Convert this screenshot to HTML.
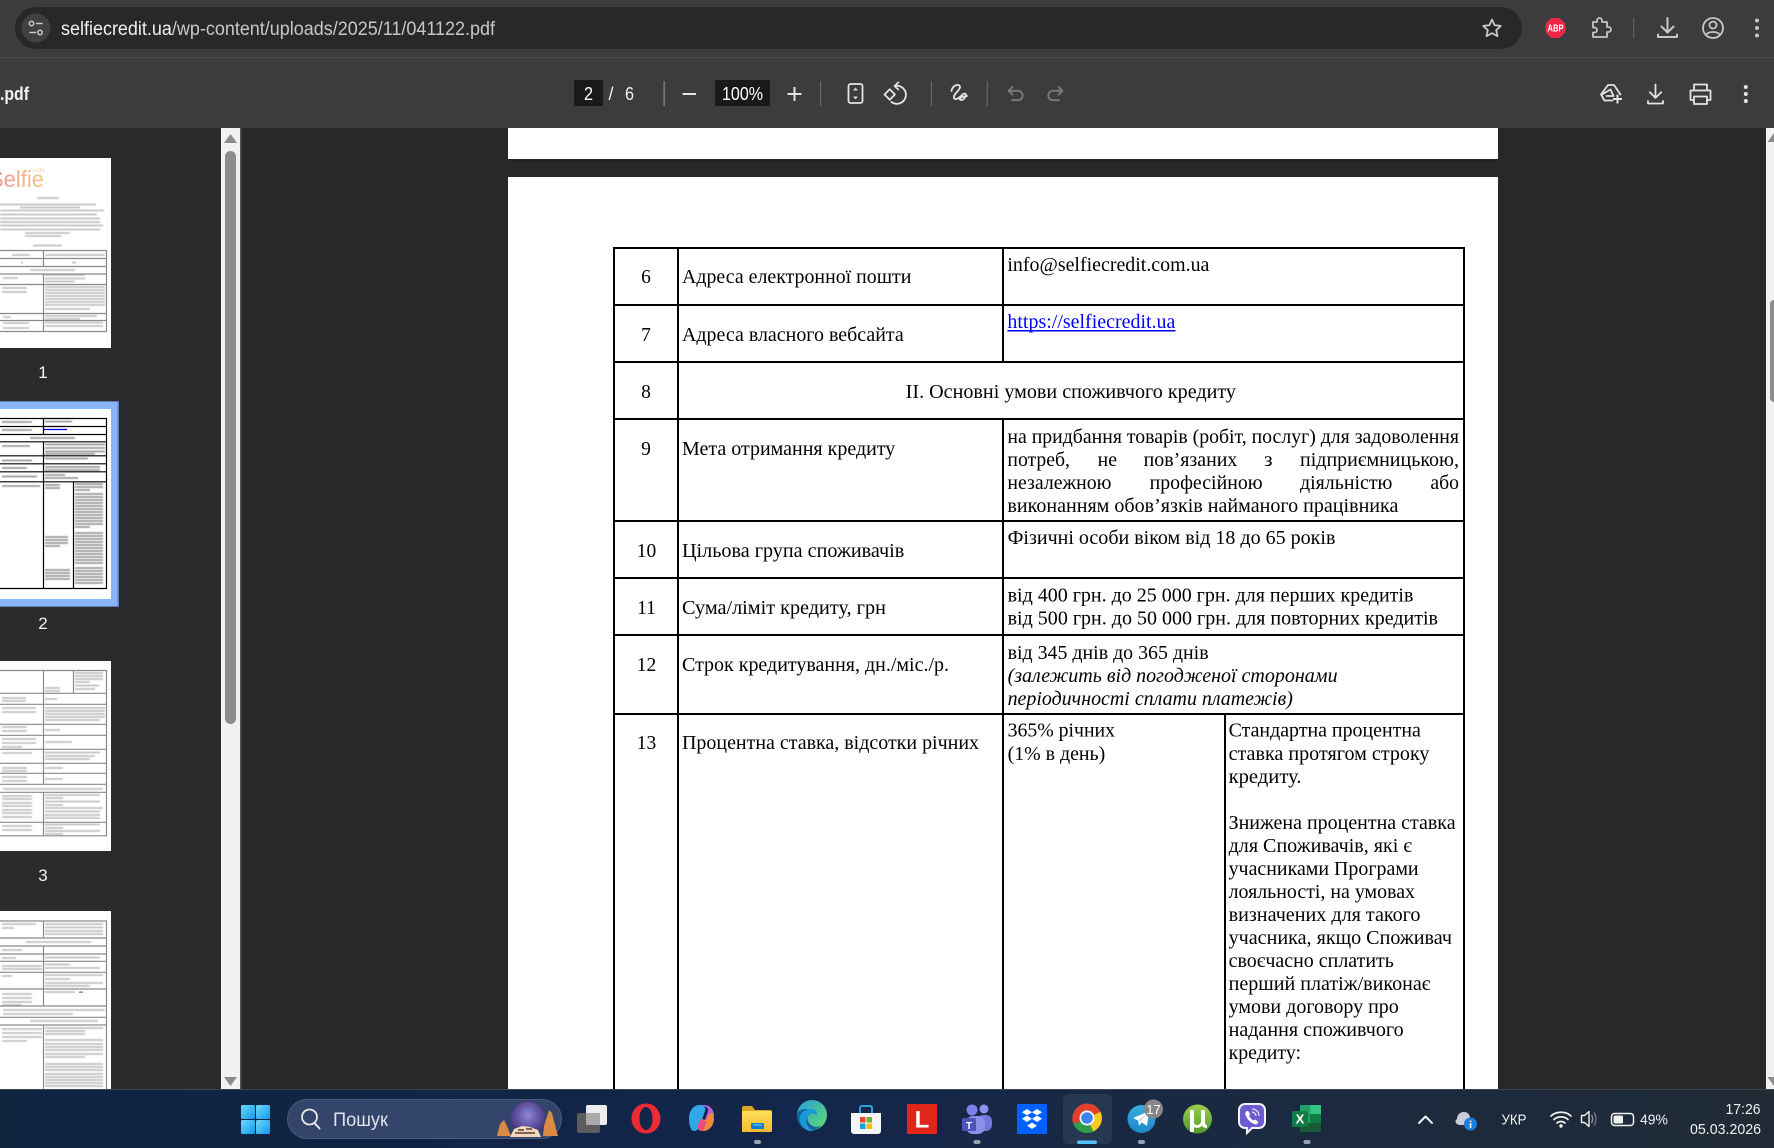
<!DOCTYPE html>
<html lang="uk"><head><meta charset="utf-8"><title>041122.pdf</title>
<style>
html,body{margin:0;padding:0;background:#282828;overflow:hidden}
svg{display:block}
.t{font:19.5px "Liberation Serif","DejaVu Serif",serif;fill:#000}
.i{font:italic 19.5px "Liberation Serif","DejaVu Serif",serif;fill:#000}
.u{font-family:"Liberation Sans","DejaVu Sans",sans-serif;fill:#e3e3e3}
.ic{fill:none;stroke:#e3e3e3;stroke-width:1.8;stroke-linecap:round;stroke-linejoin:round}
.ig{fill:none;stroke:#c7c7c7;stroke-width:1.8;stroke-linecap:round;stroke-linejoin:round}
.bar{fill:none;stroke-width:1.6}
</style></head><body>
<svg width="1774" height="1148" viewBox="0 0 1774 1148" xmlns="http://www.w3.org/2000/svg">
<defs>
<linearGradient id="tb" x1="0" x2="1" y1="0" y2="0"><stop offset="0" stop-color="#10233f"/><stop offset=".45" stop-color="#13264b"/><stop offset=".75" stop-color="#1b2a3f"/><stop offset="1" stop-color="#202b36"/></linearGradient>
<linearGradient id="win" x1="0" x2="1" y1="0" y2="1"><stop offset="0" stop-color="#6fd6f8"/><stop offset="1" stop-color="#0d9df0"/></linearGradient>
<linearGradient id="logo" x1="0" x2="1" y1="0" y2="0"><stop offset="0" stop-color="#ef8f96"/><stop offset="1" stop-color="#f5c985"/></linearGradient>
<linearGradient id="edge" x1="0" x2="1" y1="0" y2="1"><stop offset="0" stop-color="#2a9fd8"/><stop offset="1" stop-color="#5fdc6e"/></linearGradient>
<linearGradient id="tg" x1="0" x2="0" y1="0" y2="1"><stop offset="0" stop-color="#37aee2"/><stop offset="1" stop-color="#1e88c8"/></linearGradient>
<linearGradient id="ut" x1="0" x2="0" y1="0" y2="1"><stop offset="0" stop-color="#9bd04a"/><stop offset="1" stop-color="#4f9a2a"/></linearGradient>
<radialGradient id="sky" cx=".5" cy=".4" r=".6"><stop offset="0" stop-color="#8d86d6"/><stop offset="1" stop-color="#3b2a72"/></radialGradient>
<linearGradient id="fold" x1="0" x2="0" y1="0" y2="1"><stop offset="0" stop-color="#ffe05a"/><stop offset="1" stop-color="#f7b92b"/></linearGradient>
<filter id="soft" x="-5%" y="-5%" width="110%" height="110%"><feGaussianBlur stdDeviation=".45"/></filter>
</defs>

<!-- window chrome -->
<rect width="1774" height="1148" fill="#282828"/>
<rect width="1774" height="128" fill="#3c3c3c"/>
<rect y="57" width="1774" height="1" fill="#4a4a4a"/>
<rect x="15" y="7" width="1507" height="42" rx="21" fill="#282828"/>
<circle cx="36" cy="28" r="14.5" fill="#414141"/>
<g class="ig" style="stroke-width:1.5"><circle cx="31.5" cy="23.5" r="2.2"/><path d="M36.5 23.5h5.5M30 32.5h5.5"/><circle cx="40" cy="32.5" r="2.2"/></g>
<text x="61" y="35" class="u" font-size="19" textLength="434" lengthAdjust="spacingAndGlyphs"><tspan fill="#f0f0f0">selfiecredit.ua</tspan><tspan fill="#c7c7c7">/wp-content/uploads/2025/11/041122.pdf</tspan></text>
<path class="ig" d="M1492 19.5l2.6 5.7 6.2.7-4.6 4.2 1.3 6.1-5.5-3.1-5.5 3.1 1.3-6.1-4.6-4.2 6.2-.7z"/>
<path d="M1551.3 18h8.4l5.8 5.8v8.4l-5.8 5.8h-8.4l-5.8-5.8v-8.4z" fill="#ee2748"/>
<text x="1555.5" y="31.5" class="u" font-size="10" font-weight="700" text-anchor="middle" style="fill:#fff" textLength="16" lengthAdjust="spacingAndGlyphs">ABP</text>
<path class="ig" d="M1593 22h4v-1.5a2.5 2.5 0 0 1 5 0V22h5v5h1.5a2.5 2.5 0 0 1 0 5H1607v5h-14v-4.5h1.5a2.5 2.5 0 0 0 0-5H1593z"/>
<rect x="1633" y="18" width="1.3" height="20" fill="#5f5f5f"/>
<path class="ig" style="stroke-width:2" d="M1667.5 18v14M1661.5 26.500l6 6 6-6M1658 34.500v2.500h19v-2.500"/>
<circle class="ig" cx="1713" cy="28" r="10"/><circle class="ig" cx="1713" cy="25" r="3.5"/><path class="ig" d="M1706 35c2-4 12-4 14 0"/>
<g fill="#c7c7c7"><circle cx="1757" cy="20.500" r="2"/><circle cx="1757" cy="28" r="2"/><circle cx="1757" cy="35.500" r="2"/></g>

<!-- pdf toolbar -->
<text x="0" y="100" class="u" font-size="18" font-weight="700" style="fill:#f1f1f1" textLength="29" lengthAdjust="spacingAndGlyphs">.pdf</text>
<rect x="574" y="80" width="29" height="26" fill="#191919"/>
<text x="588.500" y="100" class="u" font-size="18" text-anchor="middle" style="fill:#fff" textLength="9" lengthAdjust="spacingAndGlyphs">2</text>
<text x="611" y="100" class="u" font-size="18" text-anchor="middle" style="fill:#f1f1f1">/</text>
<text x="629.500" y="100" class="u" font-size="18" text-anchor="middle" style="fill:#f1f1f1" textLength="9" lengthAdjust="spacingAndGlyphs">6</text>
<rect x="663.300" y="81" width="1.800" height="25" fill="#757575"/>
<path class="ic" style="stroke-width:2;stroke-linecap:butt" d="M682.500 94h13.500"/>
<rect x="715" y="80" width="55" height="26" fill="#191919"/>
<text x="742.500" y="100" class="u" font-size="18" text-anchor="middle" style="fill:#fff" textLength="41" lengthAdjust="spacingAndGlyphs">100%</text>
<path class="ic" style="stroke-width:2;stroke-linecap:butt" d="M787.500 94h14M794.500 87v14"/>
<rect x="820" y="81" width="1.200" height="25" fill="#6a6a6a"/>
<rect class="ic" x="848.500" y="84" width="14" height="19" rx="2"/>
<path d="M855.500 87.500l2.500 3h-5zM855.500 99.500l2.500-3h-5z" fill="#d8d8d8"/>
<path class="ic" d="M884.500 94.500l5.200-5.200 5.200 5.200-5.200 5.200z"/>
<path class="ic" d="M895 86a9 9 0 1 1-3.500 16M898.300 82.500l-3.800 3.500 3.800 3.500"/>
<rect x="930.800" y="81" width="1.200" height="25" fill="#6a6a6a"/>
<path class="ic" d="M951.500 91c1-6 8-8 8.500-4 .4 3-7 7-6 11 .8 2.500 5 .5 8-3 2.500-2.500 5-1.500 3.500 1.500-1.500 3-4 4.500-5.500 3-1-1 1-3 7-3.500"/>
<rect x="986.600" y="81" width="1.200" height="25" fill="#6a6a6a"/>
<path fill="none" stroke="#7b7b7b" stroke-width="1.800" stroke-linecap="round" stroke-linejoin="round" d="M1012.500 87l-4 3.800 4 3.800M1008.700 90.800h9.300a4.700 4.700 0 0 1 0 9.400h-6"/>
<path fill="none" stroke="#7b7b7b" stroke-width="1.800" stroke-linecap="round" stroke-linejoin="round" d="M1058.500 87l4 3.800-4 3.800M1062.300 90.800h-9.300a4.700 4.700 0 0 0 0 9.400h6"/>
<path class="ic" d="M1612.500 100.500h-8l-3.500-6 7-9.500h6l6.500 9.500M1602 94.500l8.500-5 3 6.500h-7"/>
<path class="ic" style="stroke-width:2;stroke-linecap:butt" d="M1613 99h9M1617.500 94.500v9"/>
<path class="ic" d="M1655.500 84.500v13M1649.800 92.200l5.700 5.700 5.700-5.700M1648 101v2.500h15v-2.500"/>
<path class="ic" d="M1694 90v-5.500h13V90M1694 100h-3.500v-9.500h20V100H1707M1694 96.500h13v7.500h-13z"/>
<g fill="#e3e3e3"><circle cx="1745.800" cy="87" r="2"/><circle cx="1745.800" cy="94" r="2"/><circle cx="1745.800" cy="101" r="2"/></g>

<!-- sidebar -->
<rect y="128" width="221" height="961" fill="#2a2b2d"/>
<rect x="221" y="128" width="19" height="961" fill="#f1f1f1"/>
<rect x="240" y="128" width="1.500" height="961" fill="#505050"/>
<path d="M230.500 134l6.500 9h-13z M230.500 1086l6.500-9h-13z" fill="#8c8c8c"/>
<rect x="225" y="151" width="11" height="573" rx="5.500" fill="#8c8c8c"/>

<!-- thumb 1 -->
<rect x="0" y="158" width="111" height="190" fill="#fff"/>
<text x="-11" y="187" font-family="Liberation Sans,sans-serif" font-size="23" fill="url(#logo)" textLength="55" lengthAdjust="spacingAndGlyphs">Selfie</text>
<text x="29.500" y="172" font-family="Liberation Sans,sans-serif" font-size="6" fill="#f5d5a5" textLength="15">credit</text>
<path class="bar" filter="url(#soft)" stroke="#b8b8b8" d="M37 198h22M0 204.500h96M20 207.500h60M0 210.500h104M0 214.500h97M0 218.500h100M0 222h100M0 225.500h103M0 229.500h100M25 233h45M25 236h36M33 245.500h29
M12 255h18M45 255h60M21 262.500h2M72 262.500h4M30 270h45M45 275h40M45 278.500h40M45 281.500h30M3 278h15M2 288h25M2 292h25M45 287h60M45 290h60M45 293h60M45 296h60M45 299h60M45 302h60M45 305h60M45 309h45M3 317h8M45 316h52M45 319h35M3 323h26M3 328h26M45 322.500h58M45 326h58"/>
<path fill="none" stroke="#8a8a8a" stroke-width="1.200" d="M0 250.500h106.500V331.500H0M0 258.500h106.500M0 266.500h106.500M0 274h106.500M0 284.500h106.500M0 313.500h106.500M0 320.500h106.500M43.500 250.500v16M43.500 274v57.500"/>
<text x="43" y="378" class="u" font-size="17" text-anchor="middle" style="fill:#f5f5f5">1</text>

<!-- thumb 2 -->
<rect x="0" y="401" width="119" height="206" fill="#5d7fb8"/>
<rect x="0" y="402" width="117.500" height="204" fill="#8ab4f8"/>
<rect x="0" y="409" width="111" height="190" fill="#fff"/>
<path class="bar" filter="url(#soft)" stroke="#8a8a8a" d="M2 422h30M45 421.500h27M2 430h30M30 438h45M45 444.500h60M45 448h60M45 451.500h60M2 446h28M45 454h50M2 460.500h30M45 458.500h43M2 468h25M45 467h55M45 470h55M2 476.500h35M45 475h20M45 478h33M2 486h38M45 485h15M45 488h15
M75 484h28M75 487h28M75 490h15M75 494h28M75 497h28M75 500h28M75 503h28M75 506h28M75 509h28M75 512h28M75 515h28M75 518h28M75 521h28M75 524h28M75 527h15M75 533h28M75 536h28M75 539h28M75 542h28M75 545h28M75 548h28M75 551h28M75 554h28M75 557h28M75 560h28M75 563h28M75 568h28M75 571h28M75 574h28M75 577h28M75 580h28M75 583h28M45 537h23M45 540h23M45 543h23M45 546h15M45 570h25M45 573h25M45 576h25M45 579h25"/>
<path d="M44 429.500h23" stroke="#0000e6" stroke-width="1.200"/>
<path fill="none" stroke="#000" stroke-width="1.200" d="M0 418.500h106.500V588.500H0M0 426.500h106.500M0 434.500h106.500M0 441.800h106.500M0 455.800h106.500M0 463.800h106.500M0 471.800h106.500M0 481.800h106.500M43.500 418.500v16M43.500 441.800v146.700M73.500 481.800v106.700"/>
<text x="43" y="629" class="u" font-size="17" text-anchor="middle" style="fill:#f5f5f5">2</text>

<!-- thumb 3 -->
<rect x="0" y="661" width="111" height="190" fill="#fff"/>
<path class="bar" filter="url(#soft)" stroke="#b8b8b8" d="M75 673h28M75 676h28M75 679h28M75 682h15M75 685.500h24M75 689h20M45 688h15M45 691h15M2 698h24M2 701h24M45 699h12M45 708h60M45 711h60M45 714h60M45 717h60M45 720h55M2 708h34M2 712h34M2 727h25M2 731h25M45 730h15M2 739h34M2 743h34M2 747h20M45 742h27M2 753h30M45 752.500h55M45 756h50M45 759h45M2 768h25M2 771h25M45 768h18M2 777h25M2 781h25M45 779h18M3 789h100M2 796h30M2 799h30M2 803h30M2 806h30M2 810h30M2 813h30M2 817h30M45 795h55M45 798h18M45 801.500h55M45 805h18M45 808h58M45 811.500h55M45 815h55M45 818h55M2 826h30M2 830h30M45 824.500h55M45 828h18M45 831h55M45 834h18"/>
<path fill="none" stroke="#8a8a8a" stroke-width="1.200" d="M0 670.500h106.500V835.800H0M0 693.300h106.500M0 704.300h106.500M0 724.300h106.500M0 735.300h106.500M0 749.300h106.500M0 763.300h106.500M0 773.300h106.500M0 784.300h106.500M0 792.300h106.500M0 822.300h106.500M43.500 670.500v113.800M43.500 792.300v43.500M73.500 670.500v22.800"/>
<text x="43" y="881" class="u" font-size="17" text-anchor="middle" style="fill:#f5f5f5">3</text>

<!-- thumb 4 -->
<rect x="0" y="911" width="111" height="178" fill="#fff"/>
<path class="bar" filter="url(#soft)" stroke="#b8b8b8" d="M2 924h34M2 928h12M45 924h58M45 927.500h58M45 931h58M45 934h58M26 942h65M2 950h20M2 958h14M45 957.500h55M2 966h40M2 969h40M45 964.500h25M45 968h55M2 976h10M45 975h58M45 979h25M45 983h58M45 986h45M2 994h30M2 998h30M2 1002h30M2 1005h20M45 992h30M3 1010h102M3 1014h70M30 1021h68M2 1029h40M2 1033h40M2 1037h40M2 1041h25M45 1028h58M45 1031h40M45 1034h40M45 1040h58M45 1044h58M45 1047h58M45 1050h58M45 1054h58M45 1057h40M45 1064h58M45 1067h58M45 1070h58M45 1074h58M45 1077h58M45 1080h58M45 1083h58M45 1086h58"/>
<rect x="79" y="991.500" width="4" height="1.300" fill="#777"/>
<path fill="none" stroke="#8a8a8a" stroke-width="1.200" d="M0 921h106.500V1089M0 938h106.500M0 946h106.500M0 954h106.500M0 961.300h106.500M0 972.300h106.500M0 989h106.500M0 1006h106.500M0 1017.300h106.500M0 1025h106.500M43.500 921v17M43.500 946v60M43.500 1025v64"/>

<!-- right scrollbar -->
<rect x="1766" y="128" width="8" height="961" fill="#f1f1f1"/>
<path d="M1774 133v9h-6.500z M1774 1086v-9h-6.500z" fill="#8c8c8c"/>
<rect x="1770" y="300" width="8" height="102" rx="4" fill="#8c8c8c"/>

<!-- pdf pages -->
<rect x="508" y="128" width="990" height="31" fill="#fff"/>
<rect x="508" y="159" width="990" height="3" fill="#1f1f1f" opacity=".6"/>
<rect x="508" y="177" width="990" height="912" fill="#fff"/>

<path fill="none" stroke="#000" stroke-width="2" d="M614 1089V248H1464V1089M614 305h850M614 362h850M614 419h850M614 521h850M614 578h850M614 635h850M614 714h850M678 248V1089M1003 248V362M1003 419V1089M1225 714V1089"/>

<g class="t">
<text x="646" y="283" text-anchor="middle">6</text>
<text x="646" y="341" text-anchor="middle">7</text>
<text x="646" y="398" text-anchor="middle">8</text>
<text x="646" y="455" text-anchor="middle">9</text>
<text x="646.500" y="557" text-anchor="middle">10</text>
<text x="646.500" y="614" text-anchor="middle">11</text>
<text x="646.500" y="671" text-anchor="middle">12</text>
<text x="646.500" y="749" text-anchor="middle">13</text>
<text x="682" y="283" textLength="229.400" lengthAdjust="spacingAndGlyphs">Адреса електронної пошти</text>
<text x="682" y="341" textLength="221.700" lengthAdjust="spacingAndGlyphs">Адреса власного вебсайта</text>
<text x="682" y="455" textLength="213.300" lengthAdjust="spacingAndGlyphs">Мета отримання кредиту</text>
<text x="682" y="557" textLength="222.300" lengthAdjust="spacingAndGlyphs">Цільова група споживачів</text>
<text x="682" y="614" textLength="203.900" lengthAdjust="spacingAndGlyphs">Сума/ліміт кредиту, грн</text>
<text x="682" y="671" textLength="267" lengthAdjust="spacingAndGlyphs">Строк кредитування, дн./міс./р.</text>
<text x="682" y="749" textLength="297" lengthAdjust="spacingAndGlyphs">Процентна ставка, відсотки річних</text>
<text x="905.700" y="398" textLength="330.300" lengthAdjust="spacingAndGlyphs">ІІ. Основні умови споживчого кредиту</text>
<text x="1007.400" y="271" textLength="202" lengthAdjust="spacingAndGlyphs">info@selfiecredit.com.ua</text>
<text x="1007.400" y="328" textLength="168" lengthAdjust="spacingAndGlyphs" style="fill:#0000ff">https://selfiecredit.ua</text>
<text x="1007.400" y="443" textLength="451.600" lengthAdjust="spacingAndGlyphs">на придбання товарів (робіт, послуг) для задоволення</text>
<text x="1007.400" y="466" textLength="62.600" lengthAdjust="spacingAndGlyphs">потреб,</text>
<text x="1097.700" y="466" textLength="19.300" lengthAdjust="spacingAndGlyphs">не</text>
<text x="1143.600" y="466" textLength="93.800" lengthAdjust="spacingAndGlyphs">пов’язаних</text>
<text x="1264" y="466" textLength="8.500" lengthAdjust="spacingAndGlyphs">з</text>
<text x="1300" y="466" textLength="159" lengthAdjust="spacingAndGlyphs">підприємницькою,</text>
<text x="1007.400" y="489" textLength="104.100" lengthAdjust="spacingAndGlyphs">незалежною</text>
<text x="1149.600" y="489" textLength="113" lengthAdjust="spacingAndGlyphs">професійною</text>
<text x="1300" y="489" textLength="92.400" lengthAdjust="spacingAndGlyphs">діяльністю</text>
<text x="1430.400" y="489" textLength="28.600" lengthAdjust="spacingAndGlyphs">або</text>
<text x="1007.400" y="512" textLength="391" lengthAdjust="spacingAndGlyphs">виконанням обов’язків найманого працівника</text>
<text x="1007.600" y="544" textLength="327.800" lengthAdjust="spacingAndGlyphs">Фізичні особи віком від 18 до 65 років</text>
<text x="1007.600" y="601.500" textLength="405.800" lengthAdjust="spacingAndGlyphs">від 400 грн. до 25 000 грн. для перших кредитів</text>
<text x="1007.600" y="624.500" textLength="430.400" lengthAdjust="spacingAndGlyphs">від 500 грн. до 50 000 грн. для повторних кредитів</text>
<text x="1007.600" y="659" textLength="201" lengthAdjust="spacingAndGlyphs">від 345 днів до 365 днів</text>
<text x="1007.600" y="736.500" textLength="107.400" lengthAdjust="spacingAndGlyphs">365% річних</text>
<text x="1007.600" y="760" textLength="97.600" lengthAdjust="spacingAndGlyphs">(1% в день)</text>
<text x="1228.600" y="736.500" textLength="192.300" lengthAdjust="spacingAndGlyphs">Стандартна процентна</text>
<text x="1228.600" y="760" textLength="200.900" lengthAdjust="spacingAndGlyphs">ставка протягом строку</text>
<text x="1228.600" y="783" textLength="72.900" lengthAdjust="spacingAndGlyphs">кредиту.</text>
<text x="1228.600" y="829" textLength="227" lengthAdjust="spacingAndGlyphs">Знижена процентна ставка</text>
<text x="1228.600" y="852" textLength="183.400" lengthAdjust="spacingAndGlyphs">для Споживачів, які є</text>
<text x="1228.600" y="875" textLength="190" lengthAdjust="spacingAndGlyphs">учасниками Програми</text>
<text x="1228.600" y="898" textLength="186.400" lengthAdjust="spacingAndGlyphs">лояльності, на умовах</text>
<text x="1228.600" y="921" textLength="191.900" lengthAdjust="spacingAndGlyphs">визначених для такого</text>
<text x="1228.600" y="944" textLength="223.400" lengthAdjust="spacingAndGlyphs">учасника, якщо Споживач</text>
<text x="1228.600" y="967" textLength="165.300" lengthAdjust="spacingAndGlyphs">своєчасно сплатить</text>
<text x="1228.600" y="990" textLength="201.800" lengthAdjust="spacingAndGlyphs">перший платіж/виконає</text>
<text x="1228.600" y="1013" textLength="170.200" lengthAdjust="spacingAndGlyphs">умови договору про</text>
<text x="1228.600" y="1036" textLength="175.100" lengthAdjust="spacingAndGlyphs">надання споживчого</text>
<text x="1228.600" y="1059" textLength="72.400" lengthAdjust="spacingAndGlyphs">кредиту:</text>
</g>
<rect x="1007.400" y="330" width="168" height="1.500" fill="#0000ff"/>
<text x="1007.600" y="682" class="i" textLength="330" lengthAdjust="spacingAndGlyphs">(залежить від погодженої сторонами</text>
<text x="1007.600" y="705" class="i" textLength="285.300" lengthAdjust="spacingAndGlyphs">періодичності сплати платежів)</text>

<!-- taskbar -->
<rect y="1089" width="1774" height="59" fill="url(#tb)"/>
<rect y="1089" width="1774" height="1" fill="#3a4656"/>
<g fill="url(#win)"><rect x="241" y="1105" width="14" height="14" rx="1.500"/><rect x="256" y="1105" width="14" height="14" rx="1.500"/><rect x="241" y="1120" width="14" height="14" rx="1.500"/><rect x="256" y="1120" width="14" height="14" rx="1.500"/></g>
<rect x="287.500" y="1099.500" width="274" height="39" rx="19.500" fill="#33456a" stroke="#4a5a7a"/>
<circle cx="309.500" cy="1117" r="7.500" fill="none" stroke="#e8e8e8" stroke-width="1.800"/><path d="M314.500 1123l5 5.500" stroke="#e8e8e8" stroke-width="2" stroke-linecap="round"/>
<text x="333" y="1126" class="u" font-size="19" style="fill:#dfe3ea" textLength="55" lengthAdjust="spacingAndGlyphs">Пошук</text>
<circle cx="528" cy="1119" r="17.500" fill="url(#sky)"/>
<path d="M497 1136l3-12 4-4 3 6 4 10zM543 1136l1-10 5-16 3 3 3 12 3 11z" fill="#d98a45"/>
<path d="M510 1137l4-8 8-3 8 1 8 3 3 7z" fill="#efd9b8"/><path d="M515 1133h20M518 1130h6M526 1129h6" stroke="#5a3a3a" stroke-width="1.500"/>

<rect x="577" y="1113" width="23" height="20" rx="2" fill="#5c5c5c"/>
<rect x="586" y="1105" width="21" height="20" rx="2" fill="#ededed"/>
<rect x="586" y="1113" width="14" height="12" fill="#a9a9a9"/>

<path fill-rule="evenodd" d="M646 1103.500c8 0 14.500 6.700 14.500 15s-6.500 15-14.500 15-14.500-6.700-14.500-15 6.500-15 14.500-15zM646 1107c-3.700 0-6.500 5.100-6.500 11.500s2.800 11.500 6.500 11.500 6.500-5.100 6.500-11.500-2.800-11.500-6.500-11.500z" fill="#ee2a35"/>

<path d="M689 1118c0-8 5-13 11-13 4 0 6 2 5 6l-4 12c-2 6-4 8-7 8-3 0-5-5-5-13z" fill="#2fa8e8"/>
<path d="M699 1105h5c6 0 10 5 10 10l-3 9-6-4 3-9c1-3-4-6-9-6z" fill="#b45fe2"/>
<path d="M714 1118c0 8-5 13-11 13-4 0-6-2-5-6l3-6 5 1 3-6 4-1z" fill="#f28a3c"/>
<path d="M703 1131c-4 0-6-2-5-6l3-6 6 3-3 6z" fill="#e94f7a"/>

<path d="M742 1132v-24a2 2 0 0 1 2-2h8l3 4h15a2 2 0 0 1 2 2v18a2 2 0 0 1-2 2z" fill="#e0a722"/><rect x="742" y="1111" width="30" height="21" rx="1.500" fill="url(#fold)"/><rect x="751" y="1123" width="13" height="6" rx="1" fill="#0a7fd1"/><rect x="753" y="1124.500" width="9" height="1" fill="#8fd3ff"/>
<rect x="754" y="1140" width="7" height="4" rx="2" fill="#9aa3b0"/>

<circle cx="812" cy="1115" r="15" fill="url(#edge)"/><path d="M797 1116c0-5 4-7 9-7 6 0 10 2 11 6-3-2-6-2-8 0-4 4 0 11 7 12l5-1c-3 3-8 4-11 4-8 0-13-7-13-14z" fill="#15609f"/><path d="M800 1122c-2-9 6-14 12-13 4 1 5 2 5 6-3-2-6-2-8 0-5 4-3 13 5 16-7 1-12-3-14-9z" fill="#1b9ad8"/>

<path d="M851 1113h30v18a3 3 0 0 1-3 3h-24a3 3 0 0 1-3-3z" fill="#f5f5f5"/><path d="M860 1113v-5a2 2 0 0 1 2-2h8a2 2 0 0 1 2 2v5" fill="none" stroke="#2aa4e0" stroke-width="2"/>
<rect x="860" y="1117" width="5.500" height="5.500" fill="#e8492e"/><rect x="866.500" y="1117" width="5.500" height="5.500" fill="#6fb52c"/><rect x="860" y="1123.500" width="5.500" height="5.500" fill="#12a3e8"/><rect x="866.500" y="1123.500" width="5.500" height="5.500" fill="#fbbc05"/>

<rect x="907" y="1104" width="30" height="30" fill="#e1251b"/><text x="922" y="1127.500" font-family="Liberation Sans,sans-serif" font-weight="700" font-size="24" fill="#fff" text-anchor="middle">L</text>

<circle cx="972" cy="1110" r="5.500" fill="#7b83eb"/><circle cx="984" cy="1109" r="4.500" fill="#8d94f0"/><rect x="977" y="1115" width="15" height="16" rx="6" fill="#7178d9"/><rect x="966" y="1116" width="19" height="18" rx="7" fill="#8a90ea"/><rect x="962" y="1118" width="14" height="13" rx="1.500" fill="#4b53bc"/><text x="969" y="1129" font-family="Liberation Sans,sans-serif" font-weight="700" font-size="10" fill="#fff" text-anchor="middle">T</text>
<rect x="973.500" y="1140" width="7" height="4" rx="2" fill="#9aa3b0"/>

<rect x="1017" y="1104" width="30" height="30" fill="#0061fe"/>
<path d="M1027 1109l5 3.200-5 3.200-5-3.200zM1037 1109l5 3.200-5 3.200-5-3.200zM1027 1115.600l5 3.200-5 3.200-5-3.200zM1037 1115.600l5 3.200-5 3.200-5-3.200zM1032 1122.500l5 3.200-5 3.200-5-3.200z" fill="#fff"/>

<rect x="1063" y="1094" width="49" height="50" rx="5" fill="#fff" opacity=".07"/>
<path d="M1087 1118L1100.600 1111.700A15 15 0 0 0 1073.400 1124.300Z" fill="#e0412f"/>
<path d="M1087 1118L1073.400 1124.300A15 15 0 0 0 1093.300 1131.600Z" fill="#2f9e48"/>
<path d="M1087 1118L1093.300 1131.600A15 15 0 0 0 1100.600 1111.700Z" fill="#fbc723"/>
<circle cx="1087" cy="1118" r="7.500" fill="#fff"/><circle cx="1087" cy="1118" r="5.800" fill="#3f83f0"/>
<rect x="1077" y="1140.500" width="20" height="3.500" rx="1.700" fill="#4fc3f7"/>

<circle cx="1141.500" cy="1119" r="14" fill="url(#tg)"/><path d="M1133 1118l16-7-2 15-5-3.500-3 3-1-5z" fill="#fff"/><path d="M1138 1120.500l9-7-6.500 8" fill="#c9d9ea"/>
<circle cx="1153.500" cy="1109" r="9.500" fill="#888"/><text x="1153.500" y="1114" class="u" font-size="13" text-anchor="middle" style="fill:#fff">17</text>
<rect x="1138" y="1140" width="7" height="4" rx="2" fill="#9aa3b0"/>

<circle cx="1197.500" cy="1119" r="14.500" fill="url(#ut)"/><path d="M1190 1110h4v12c0 4 6 4 7 0v-12h4v12c0 2 .7 3 2 3v3c-2.500 0-4-.7-5-2.500-2 2.500-5 3-8 1.500v5h-4z" fill="#fff"/>

<path d="M1245 1104h14a6 6 0 0 1 6 6v12a6 6 0 0 1-6 6h-7l-5 5v-5h-2a6 6 0 0 1-6-6v-12a6 6 0 0 1 6-6z" fill="#6f5bd0" stroke="#f4f4f8" stroke-width="2"/>
<path d="M1247 1111c-2 1-2 3-1 5 1 3 5 7 8 8 2 1 4 0 4-2l-2.500-2.500-2 1c-2-1-3.500-3-4.500-4.500l1.200-2-2-3z" fill="#fff"/><path d="M1252 1109c4 0 7 3 7 7M1252 1112c2 0 4 2 4 4" fill="none" stroke="#fff" stroke-width="1"/>

<rect x="1300" y="1105" width="21" height="27" rx="1.500" fill="#21a366"/><rect x="1310" y="1105" width="11" height="9" fill="#33c481"/><rect x="1300" y="1123" width="21" height="9" fill="#185c37"/><rect x="1310" y="1114" width="11" height="9" fill="#107c41"/>
<rect x="1292" y="1111" width="16" height="16" rx="1.500" fill="#107c41"/><text x="1300" y="1123.500" font-family="Liberation Sans,sans-serif" font-weight="700" font-size="13" fill="#fff" text-anchor="middle">X</text>
<rect x="1303.500" y="1140" width="7" height="4" rx="2" fill="#9aa3b0"/>

<path d="M1419 1123l6.500-6.500 6.500 6.500" fill="none" stroke="#f0f0f0" stroke-width="2" stroke-linecap="round" stroke-linejoin="round"/>
<path d="M1457 1124c-2-1-2-4 0-5 0-4 3-7 7-7 4 0 6 3 6 6v7h-11z" fill="#c9ced6"/><circle cx="1470.500" cy="1124" r="6.500" fill="#1a7fe0"/><rect x="1469.800" y="1123" width="1.500" height="5" fill="#fff"/><rect x="1469.800" y="1120.500" width="1.500" height="1.500" fill="#fff"/>
<text x="1501.500" y="1124.500" class="u" font-size="15" style="fill:#f0f0f0" textLength="25" lengthAdjust="spacingAndGlyphs">УКР</text>
<path d="M1551 1116c5-5 15-5 20 0M1554 1119.500c3.500-3.500 10.500-3.500 14 0M1557 1123c2-2 6-2 8 0" fill="none" stroke="#f0f0f0" stroke-width="1.700" stroke-linecap="round"/><circle cx="1561" cy="1126" r="1.700" fill="#f0f0f0"/>
<path d="M1581.500 1115.500h3l4.500-4v15l-4.500-4h-3z" fill="none" stroke="#f0f0f0" stroke-width="1.400" stroke-linejoin="round"/><path d="M1591.500 1115c1.500 2 1.500 6 0 8" fill="none" stroke="#8a93a0" stroke-width="1.400"/><path d="M1594 1112.500c2.500 3.500 2.500 9.500 0 13" fill="none" stroke="#6f7885" stroke-width="1.400"/>
<rect x="1611.500" y="1113.500" width="22" height="12" rx="3" fill="none" stroke="#f0f0f0" stroke-width="1.500"/><rect x="1613.500" y="1115.500" width="9.500" height="8" rx="1.500" fill="#f0f0f0"/>
<text x="1640" y="1124.500" class="u" font-size="15" style="fill:#f0f0f0" textLength="28" lengthAdjust="spacingAndGlyphs">49%</text>
<text x="1725.500" y="1114" class="u" font-size="15" style="fill:#f0f0f0" textLength="35" lengthAdjust="spacingAndGlyphs">17:26</text>
<text x="1690" y="1134" class="u" font-size="15" style="fill:#f0f0f0" textLength="71" lengthAdjust="spacingAndGlyphs">05.03.2026</text>
</svg>
</body></html>
